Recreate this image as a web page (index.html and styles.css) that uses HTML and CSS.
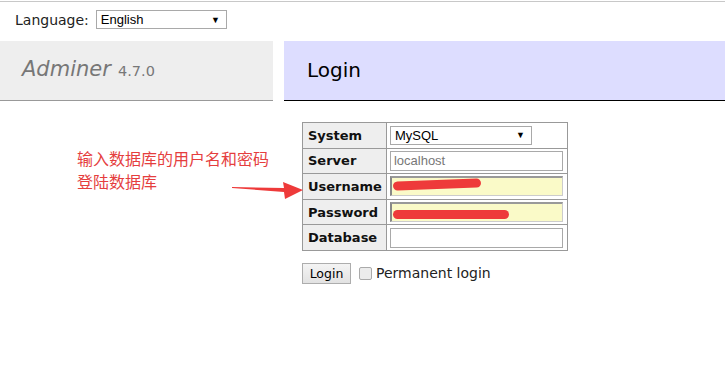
FILE: index.html
```html
<!DOCTYPE html>
<html>
<head>
<meta charset="utf-8">
<link rel="stylesheet" href="styles.css">
</head>
<body>
<div class="topline"></div>
<div class="lang">
  <label>Language:</label>
  <div class="select lang-select"><span>English</span><span class="caret">▼</span></div>
</div>
<div class="header">
  <div class="brand"><span class="name">Adminer</span> <span class="ver">4.7.0</span></div>
  <div class="title">Login</div>
</div>
<div class="content">
  <table class="form">
    <tr><th>System</th><td><div class="select sys-select"><span>MySQL</span><span class="caret">▼</span></div></td></tr>
    <tr><th>Server</th><td><div class="input placeholder">localhost</div></td></tr>
    <tr><th>Username</th><td><div class="input auto"><span class="scrib scrib-u"></span></div></td></tr>
    <tr><th>Password</th><td><div class="input auto"><span class="scrib scrib-p"></span></div></td></tr>
    <tr><th>Database</th><td><div class="input"></div></td></tr>
  </table>
  <div class="actions">
    <button class="btn">Login</button>
    <span class="check"></span>
    <span class="perm">Permanent login</span>
  </div>
</div>
<div class="note"><div>输入数据库的用户名和密码</div><div>登陆数据库</div></div>
<svg class="arrow" width="80" height="24" viewBox="0 0 80 24">
  <polygon points="0,5 52,6 51,0 71,8 53,17 52,10 0,6" fill="#ee3a3a"/>
</svg>
</body>
</html>
```
FILE: styles.css
```css
html, body { margin: 0; padding: 0; background: #fff; }
body { font-family: "DejaVu Sans", Verdana, sans-serif; font-size: 13px; color: #000; position: relative; height: 388px; overflow: hidden; }
.topline { height: 1px; margin-top: 1px; background: #c8c8c8; }
.lang { display: flex; align-items: center; padding: 8px 0 0 15px; height: 19px; gap: 7px; font-size: 14px; color: #222; }
.select { display: flex; align-items: center; justify-content: space-between; border: 1px solid #a9a9a9; background: #fff; font-family: "Liberation Sans", Arial, sans-serif; font-size: 13px; padding: 0 6px 0 4px; box-sizing: border-box; color: #000; }
.caret { font-size: 9px; }
.lang-select { width: 131px; height: 19px; }
.header { display: flex; margin-top: 12px; height: 60px; gap: 11px; }
.brand { width: 273px; background: #eee; border-bottom: 1px solid #999; box-sizing: border-box; padding: 16px 0 0 22px; color: #777; }
.brand .name { font-style: italic; font-size: 21px; }
.brand .ver { font-size: 14.5px; margin-left: 3px; }
.title { flex: 1; background: #ddf; border-bottom: 1px solid #000; box-sizing: border-box; padding: 17px 0 0 23px; font-size: 20px; color: #000; }
.content { padding: 21px 0 0 302px; }
.form { border-collapse: collapse; border: 1px solid #999; }
.form th, .form td { border: 1px solid #999; height: 24.6px; padding: 0 3px; }
.form th { background: #eee; text-align: left; font-weight: bold; font-size: 13px; padding: 0 4px 0 5px; width: 72px; color: #111; }
.form td { padding: 0 4px 0 3px; }
.input { width: 173px; height: 20px; box-sizing: border-box; border: 1px solid #a9a9a9; background: #fff; font-family: "Liberation Sans", Arial, sans-serif; font-size: 13px; padding: 1px 3px; position: relative; }
.placeholder { color: #777; }
.auto { background: #fafac8; border-color: #999 #ccc #ccc #888; border-width: 2px 1px 1px 2px; }
.sys-select { width: 142px; height: 19px; }
.scrib { position: absolute; background: #ee3a3a; border-radius: 5px; height: 9px; }
.scrib-u { left: 1px; top: 2px; width: 88px; transform: rotate(-2deg); }
.scrib-p { left: 1px; top: 6px; width: 116px; }
.actions { display: flex; align-items: center; margin-top: 12px; gap: 0; }
.btn { font-family: "DejaVu Sans", Verdana, sans-serif; font-size: 12.5px; height: 21px; width: 49px; padding: 0; border: 1px solid #adadad; background: linear-gradient(#f4f4f4, #e2e2e2); color: #000; }
.check { width: 11px; height: 11px; border: 1px solid #aaa; background: #ececec; margin-left: 8px; border-radius: 2px; }
.perm { margin-left: 4px; font-size: 14px; color: #222; }
.note { position: absolute; left: 77px; top: 147px; color: #e53e3e; font-family: "Noto Sans CJK SC", sans-serif; font-size: 16px; line-height: 23px; }
.arrow { position: absolute; left: 232px; top: 182px; }
```
